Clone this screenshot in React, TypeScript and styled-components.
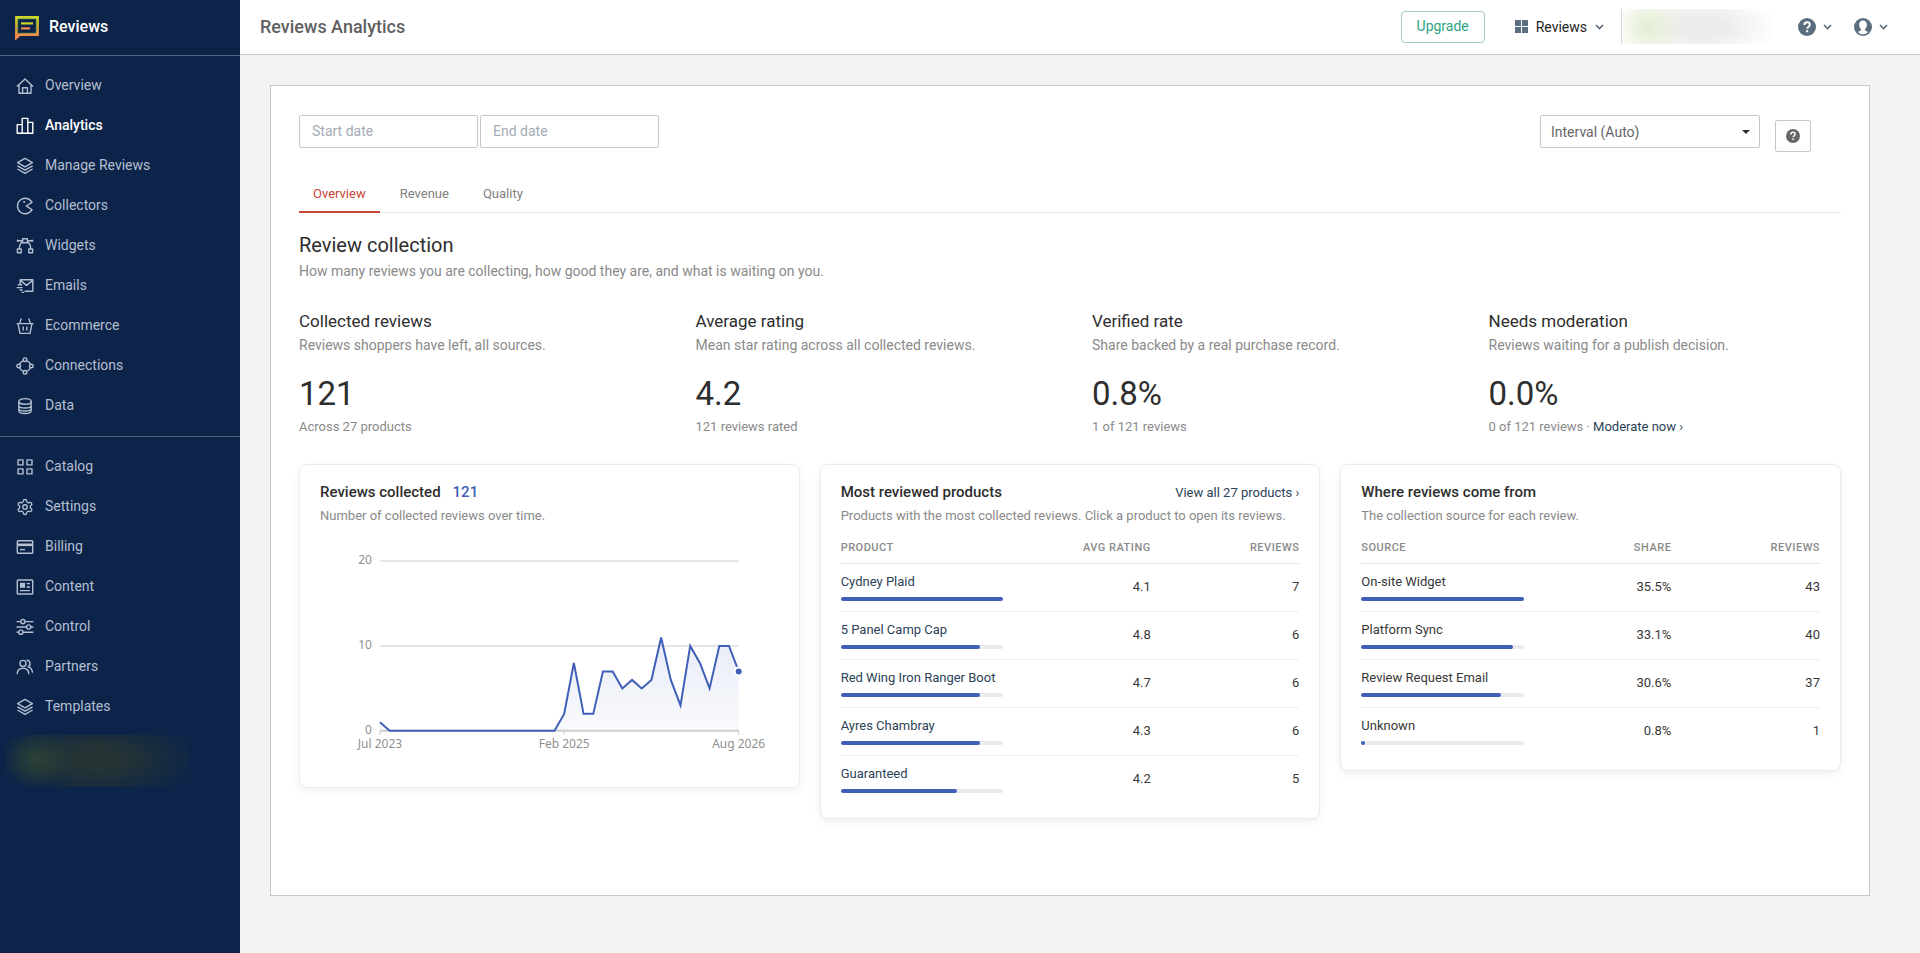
import React from 'react';
import styled, { createGlobalStyle } from 'styled-components';
import { Settings } from 'lucide-react';

const GlobalStyle = createGlobalStyle`
  *, *::before, *::after { box-sizing: border-box; }
  body {
    margin: 0;
    background: #f3f3f3;
    color: #2e2e2e;
    font-family: Roboto, "Liberation Sans", sans-serif;
    font-size: 14px;
    line-height: 20px;
  }
  h1, h2, h3, p { margin: 0; font-weight: 400; }
  a { color: inherit; text-decoration: none; }
  button, input, select { font-family: inherit; }
`;

const Shell = styled.div`
  display: flex;
  min-height: 100vh;
`;

/* ---------- Sidebar ---------- */

const Sidebar = styled.aside`
  flex: 0 0 240px;
  background: #0c2449;
  color: #b4bfd1;
`;

const Brand = styled.a`
  display: flex;
  align-items: center;
  gap: 10px;
  height: 56px;
  padding: 0 15px 2px;
  border-bottom: 1px solid #56657f;
  color: #fff;
  font-size: 16px;
  font-weight: 500;
`;

const BrandIcon = styled.svg`
  width: 24px;
  height: 24px;
  margin-top: 2px;
`;

const NavList = styled.ul`
  list-style: none;
  margin: 0;
  padding: 10px 0;
  & + & { border-top: 1px solid #56657f; }
`;

const NavLink = styled.a<{ $active?: boolean }>`
  display: flex;
  align-items: center;
  gap: 11px;
  height: 40px;
  padding: 0 16px 2px;
  color: ${p => (p.$active ? '#fff' : 'inherit')};
  font-weight: ${p => (p.$active ? 500 : 400)};
  svg { flex: none; margin-top: 2px; }
`;

const SidebarHaze = styled.div`
  height: 52px;
  margin: -2px 50px 0 5px;
  background:
    radial-gradient(ellipse 34px 28px at 31px 24px, rgba(62, 86, 44, 0.5), transparent),
    radial-gradient(ellipse 56% 84% at 50% 46%, rgba(46, 58, 44, 0.75) 20%, transparent);
`;

/* ---------- Top bar ---------- */

const Content = styled.div`
  flex: 1;
  min-width: 0;
`;

const TopBar = styled.header`
  display: flex;
  align-items: center;
  height: 55px;
  padding: 0 32px 1px 20px;
  background: #fff;
  border-bottom: 1px solid #c8c8c8;
`;

const PageTitle = styled.h1`
  flex: 1;
  color: #5f5f5f;
  font-size: 18px;
  font-weight: 500;
`;

const UpgradeButton = styled.button`
  width: 84px;
  height: 32px;
  margin-right: 30px;
  padding: 0 0 2px;
  border: 1px solid #9fcfb0;
  border-radius: 4px;
  background: #fff;
  color: #2aa686;
  font-size: 14px;
  cursor: pointer;
`;

const MenuButton = styled.button<{ $gap: number }>`
  display: flex;
  align-items: center;
  gap: ${p => p.$gap}px;
  padding: 0;
  border: 0;
  background: none;
  color: #1f1f1f;
  font-size: 14px;
  cursor: pointer;
`;

const AccountHaze = styled.div`
  width: 155px;
  height: 35px;
  margin: 0 22px 0 17px;
  border-left: 1px solid #d8d8d8;
  background:
    radial-gradient(ellipse 36px 34px at 26px 18px, #e4eed2, transparent),
    radial-gradient(ellipse 76px 34px at 80px 18px, #ececec 30%, transparent);
`;

const MenuGap = styled.div`
  width: 22px;
`;

/* ---------- Panel ---------- */

const Main = styled.main`
  padding: 30px 50px 56px 30px;
`;

const Panel = styled.section`
  padding: 29px 28px 76px;
  border: 1px solid #c8c8c8;
  background: #fff;
`;

const Filters = styled.form`
  display: flex;
  align-items: flex-start;
  gap: 2px;
`;

const DateInput = styled.input`
  width: 179px;
  height: 33px;
  padding: 0 12px 2px;
  border: 1px solid #c8c8c8;
  border-radius: 2px;
  background: #fff;
  color: #666;
  font-size: 14px;
  outline: none;
  &::placeholder { color: #a3abb4; opacity: 1; }
`;

const SelectWrap = styled.div`
  display: flex;
  align-items: center;
  justify-content: flex-end;
  position: relative;
  width: 220px;
  margin-left: auto;
  svg {
    position: absolute;
    right: 10px;
    pointer-events: none;
  }
`;

const IntervalSelect = styled.select`
  width: 100%;
  height: 33px;
  padding: 0 30px 0 10px;
  appearance: none;
  border: 1px solid #c8c8c8;
  border-radius: 2px;
  background: #fff;
  color: #666;
  font-size: 14px;
`;

const HelpButton = styled.button`
  display: flex;
  align-items: center;
  justify-content: center;
  width: 36px;
  height: 32px;
  margin: 5px 30px 0 13px;
  padding: 0;
  border: 1px solid #c8c8c8;
  border-radius: 2px;
  background: #fff;
  cursor: pointer;
`;

const Tabs = styled.nav`
  display: flex;
  gap: 6px;
  margin-top: 20px;
  border-bottom: 1px solid #e6e6e6;
`;

const Tab = styled.a<{ $active?: boolean }>`
  height: 41px;
  margin-bottom: -1px;
  padding: 12px 14px 7px;
  border-bottom: 2px solid ${p => (p.$active ? '#c64537' : 'transparent')};
  color: ${p => (p.$active ? '#c64537' : '#808080')};
  font-size: 13px;
`;

const SectionTitle = styled.h2`
  margin-top: 20px;
  font-size: 20px;
  line-height: 24px;
`;

const Muted = styled.p<{ $small?: boolean }>`
  color: #8a8a8a;
  font-size: ${p => (p.$small ? 13 : 14)}px;
`;

const Kpis = styled.div`
  display: grid;
  grid-template-columns: repeat(4, 1fr);
  gap: 44px;
  margin-top: 28px;
`;

const KpiTitle = styled.h3`
  font-size: 17px;
  line-height: 24px;
  margin-bottom: 2px;
`;

const KpiValue = styled.p`
  margin: 19px 0 3px;
  color: #2e2e2e;
  font-size: 33px;
  line-height: 40px;
`;

const TextLink = styled.a`
  color: #2b4257;
`;

const SectionIntro = styled(Muted)`
  margin-top: 4px;
`;

/* ---------- Cards ---------- */

const Cards = styled.div`
  display: grid;
  grid-template-columns: repeat(3, 1fr);
  align-items: start;
  gap: 20px;
  margin-top: 27px;
`;

const Card = styled.article`
  padding: 17px 20px 15px;
  border: 1px solid #ebebeb;
  border-radius: 8px;
  background: #fff;
  box-shadow: 0 3px 8px rgba(0, 0, 0, 0.06);
`;

const CardHead = styled.div`
  display: flex;
  align-items: baseline;
  gap: 12px;
  height: 20px;
  margin-bottom: 4px;
`;

const CardTitle = styled.h3`
  font-size: 15px;
  font-weight: 500;
`;

const CardTotal = styled.span`
  color: #3f5fb8;
  font-size: 15px;
  font-weight: 500;
`;

const CardLink = styled(TextLink)`
  margin-left: auto;
  font-size: 13px;
`;

const ChartSvg = styled.svg`
  display: block;
  width: 100%;
  height: auto;
  margin-top: 19px;
  text {
    fill: #909090;
    font-family: "Noto Sans", Roboto, sans-serif;
    font-size: 12px;
  }
`;

const DataTable = styled.table`
  width: 100%;
  margin-top: 7px;
  border-collapse: separate;
  border-spacing: 0;
  table-layout: fixed;
  th {
    height: 31px;
    padding: 0 0 1px;
    border-bottom: 1px solid #e4e4e4;
    color: #8a8a8a;
    font-size: 11px;
    font-weight: 500;
    letter-spacing: 0.5px;
    text-align: right;
    text-transform: uppercase;
  }
  th:first-child, td:first-child { text-align: left; }
  td {
    height: 48px;
    padding: 0 0 1px;
    border-bottom: 1px solid #f0f0f0;
    color: #383838;
    font-size: 13px;
    text-align: right;
  }
  td:first-child { padding-bottom: 3px; }
  tr:last-child td { border-bottom: 0; height: 47px; }
  .name { width: 35.5%; }
  .mid { width: 32.1%; }
`;

const ItemName = styled.span`
  display: block;
  white-space: nowrap;
`;

const ItemLink = styled(TextLink)`
  display: block;
  white-space: nowrap;
`;

const Track = styled.div`
  height: 4px;
  margin-top: 5px;
  border-radius: 2px;
  background: #ececec;
`;

const Fill = styled.div`
  height: 4px;
  border-radius: 2px;
  background: #3f5fb8;
`;

/* ---------- Icons ---------- */

const NavSvg = ({ children }: { children: React.ReactNode }) => (
  <svg width="18" height="18" viewBox="0 0 18 18" fill="none" stroke="currentColor" strokeWidth="1.4" strokeLinejoin="round" aria-hidden="true">
    {children}
  </svg>
);

const stackIcon = (
  <NavSvg>
    <path d="M9 1.4 16.4 5.6 9 9.8 1.6 5.6z" />
    <path d="M1.4 8.8 9 13.1 16.6 8.8M1.4 12 9 16.3 16.6 12" />
  </NavSvg>
);

const icons: Record<string, React.ReactNode> = {
  home: (
    <NavSvg>
      <path d="M1 9.4 9 1.9l8 7.5M3 8v8.3h12V8M6.6 16v-5.2h4.8V16" />
    </NavSvg>
  ),
  chart: (
    <NavSvg>
      <path d="M1.2 7.6h5v8.7h-5zM6.2 1.4h5.6v14.9H6.2zM11.8 5.4h5v10.9h-5z" />
    </NavSvg>
  ),
  stack: stackIcon,
  collector: (
    <NavSvg>
      <path d="M16 5.4a7.7 7.7 0 1 0 0 7.2L10.2 9z" />
      <circle cx="8.2" cy="5" r="1" fill="currentColor" stroke="none" />
    </NavSvg>
  ),
  bezier: (
    <NavSvg>
      <path d="M6.6 1.7h4.8v4H6.6zM1.4 12h3.8v3.8H1.4zM12.8 12h3.8v3.8h-3.8zM1.5 3.7h5M11.4 3.7h5M3.3 12c0-3.4 1.2-6 3.3-7.4M14.7 12c0-3.4-1.2-6-3.3-7.4" />
      <path d="M.8 2.7h2v2h-2zM15.2 2.7h2v2h-2z" fill="currentColor" stroke="none" />
    </NavSvg>
  ),
  mail: (
    <NavSvg>
      <path d="M4.2 7.2V2.8h12.6v11.4H8.6M4.4 3.4l6.1 5 6.1-5M1.8 7.7h4.4M.6 10.6h6M3.6 13h3M5.6 15.4h2.6" />
    </NavSvg>
  ),
  basket: (
    <NavSvg>
      <path d="M5.3 1.4 3.6 6.6M12.7 1.4l1.7 5.2M.6 6.6h16.8M2 6.6l2 9.8h10l2-9.8M7.2 9.6v4M10.8 9.6v4" />
    </NavSvg>
  ),
  connections: (
    <NavSvg>
      <path d="M6.8 3.8A6 6 0 0 0 3.7 7M11.2 3.8A6 6 0 0 1 14.3 7M3.7 11a6 6 0 0 0 3.1 3.2M14.3 11a6 6 0 0 1-3.1 3.2" />
      <circle cx="9" cy="2.7" r="1.8" />
      <circle cx="9" cy="15.3" r="1.8" />
      <circle cx="2.7" cy="9" r="1.8" />
      <circle cx="15.3" cy="9" r="1.8" />
    </NavSvg>
  ),
  data: (
    <NavSvg>
      <ellipse cx="9" cy="4.4" rx="6.2" ry="2.8" />
      <path d="M2.8 4.4v9.4c0 1.5 2.8 2.7 6.2 2.7s6.2-1.2 6.2-2.7V4.4M2.8 8.4c0 1.5 2.8 2.6 6.2 2.6s6.2-1.1 6.2-2.6M2.8 11.4c0 1.5 2.8 2.6 6.2 2.6s6.2-1.1 6.2-2.6" />
    </NavSvg>
  ),
  catalog: (
    <NavSvg>
      <path d="M2 1.9h5v5H2zM11 1.9h5v5h-5zM2 10.9h5v5H2zM11 10.9h5v5h-5z" />
    </NavSvg>
  ),
  settings: <Settings size={18} strokeWidth={1.8} aria-hidden="true" />,
  billing: (
    <NavSvg>
      <rect x="1.3" y="2.8" width="15.4" height="12.4" rx="0.8" />
      <path d="M1.3 6.8h15.4" strokeWidth="2.6" />
      <path d="M4 11.6h5" />
    </NavSvg>
  ),
  content: (
    <NavSvg>
      <rect x="1.3" y="2" width="15.4" height="14" rx="0.8" />
      <rect x="4" y="4.8" width="5" height="5" fill="currentColor" stroke="none" />
      <path d="M10.6 5.6H14M10.6 9H14M4 12.6h10" />
    </NavSvg>
  ),
  control: (
    <NavSvg>
      <path d="M.6 3.6h4.2M9 3.6h8.4M.6 9h10M14.8 9h2.6M.6 14.2h2.2M7 14.2h10.4" />
      <circle cx="6.9" cy="3.6" r="2.1" />
      <circle cx="12.7" cy="9" r="2.1" />
      <circle cx="4.9" cy="14.2" r="2.1" />
    </NavSvg>
  ),
  partners: (
    <NavSvg>
      <circle cx="7" cy="5.4" r="3" />
      <path d="M1.2 16.2c0-3.8 2.4-5.9 5.8-5.9s5.8 2.1 5.8 5.9M10.6 2.3a3.3 3.3 0 0 1 1.5 6.3c2.6 1 4.2 3 4.4 6.2" />
    </NavSvg>
  ),
};

const Chevron = () => (
  <svg width="9" height="6" viewBox="0 0 9 6" fill="none" stroke="#5a6b7b" strokeWidth="1.6" aria-hidden="true">
    <path d="M1 1l3.5 3.5L8 1" />
  </svg>
);

const QuestionIcon = ({ size, color }: { size: number; color: string }) => (
  <svg width={size} height={size} viewBox="0 0 18 18" fill="none" aria-hidden="true">
    <circle cx="9" cy="9" r="9" fill={color} />
    <path d="M6.3 7c0-1.6 1.1-2.7 2.8-2.7s2.7 1 2.7 2.4c0 2-2.6 1.9-2.6 4" stroke="#fff" strokeWidth="1.9" />
    <path d="M8.1 12.2h2.1v2H8.1z" fill="#fff" />
  </svg>
);

const UserIcon = () => (
  <svg width="18" height="18" viewBox="0 0 18 18" aria-hidden="true">
    <circle cx="9" cy="9" r="9" fill="#5a6e80" />
    <path d="M9 2.6c2.4 0 3.9 1.7 3.9 4.2 0 1.9-.8 3.4-1.8 4.3v1.2c.6.8 2 1 3.1 1.8A7.2 7.2 0 0 1 9 16.5a7.2 7.2 0 0 1-5.2-2.4c1.1-.8 2.5-1 3.1-1.8v-1.2c-1-.9-1.8-2.4-1.8-4.3 0-2.5 1.5-4.2 3.9-4.2z" fill="#fff" />
  </svg>
);

/* ---------- Data ---------- */

const primaryNav = [
  ['Overview', 'home'], ['Analytics', 'chart'], ['Manage Reviews', 'stack'],
  ['Collectors', 'collector'], ['Widgets', 'bezier'], ['Emails', 'mail'],
  ['Ecommerce', 'basket'], ['Connections', 'connections'], ['Data', 'data'],
];

const secondaryNav = [
  ['Catalog', 'catalog'], ['Settings', 'settings'], ['Billing', 'billing'],
  ['Content', 'content'], ['Control', 'control'], ['Partners', 'partners'],
  ['Templates', 'stack'],
];

const kpis = [
  { title: 'Collected reviews', text: 'Reviews shoppers have left, all sources.', value: '121', note: 'Across 27 products' },
  { title: 'Average rating', text: 'Mean star rating across all collected reviews.', value: '4.2', note: '121 reviews rated' },
  { title: 'Verified rate', text: 'Share backed by a real purchase record.', value: '0.8%', note: '1 of 121 reviews' },
  { title: 'Needs moderation', text: 'Reviews waiting for a publish decision.', value: '0.0%', note: '0 of 121 reviews · ', link: 'Moderate now ›' },
];

type Row = { name: string; mid: string; count: number };

const products: Row[] = [
  { name: 'Cydney Plaid', mid: '4.1', count: 7 },
  { name: '5 Panel Camp Cap', mid: '4.8', count: 6 },
  { name: 'Red Wing Iron Ranger Boot', mid: '4.7', count: 6 },
  { name: 'Ayres Chambray', mid: '4.3', count: 6 },
  { name: 'Guaranteed', mid: '4.2', count: 5 },
];

const sources: Row[] = [
  { name: 'On-site Widget', mid: '35.5%', count: 43 },
  { name: 'Platform Sync', mid: '33.1%', count: 40 },
  { name: 'Review Request Email', mid: '30.6%', count: 37 },
  { name: 'Unknown', mid: '0.8%', count: 1 },
];

/* Monthly totals, July 2023 to August 2026. */
const monthly = [1, ...Array(18).fill(0), 2, 8, 2, 2, 7, 7, 5, 6, 5, 6, 11, 6, 3, 10, 8, 5, 10, 10, 7];

/* ---------- Parts ---------- */

const Nav = ({ items }: { items: string[][] }) => (
  <NavList>
    {items.map(([label, icon]) => (
      <li key={label}>
        <NavLink href="#" $active={label === 'Analytics'} aria-current={label === 'Analytics' ? 'page' : undefined}>
          {icons[icon]}
          {label}
        </NavLink>
      </li>
    ))}
  </NavList>
);

const CHART = { left: 60, right: 419, base: 186, step: 8.5 };

const ReviewsChart = () => {
  const dx = (CHART.right - CHART.left) / (monthly.length - 1);
  const x = (i: number) => CHART.left + i * dx;
  const y = (v: number) => CHART.base - v * CHART.step;
  const line = monthly.map((v, i) => `${x(i)},${y(v)}`).join(' ');
  const last = monthly.length - 1;
  return (
    <ChartSvg viewBox="0 0 459 227" role="img" aria-label="Collected reviews per month">
      <defs>
        <linearGradient id="area" x1="0" y1="0" x2="0" y2="1">
          <stop offset="0" stopColor="#3f5fb8" stopOpacity="0.12" />
          <stop offset="1" stopColor="#3f5fb8" stopOpacity="0.03" />
        </linearGradient>
      </defs>
      {[20, 10].map(v => (
        <path key={v} d={`M${CHART.left} ${y(v)}H${CHART.right}`} stroke="#e6e6e6" strokeWidth="2" />
      ))}
      <path d={`M${CHART.left} ${CHART.base}H${CHART.right}`} stroke="#cfcfcf" strokeWidth="2" />
      {[0, 10, 20].map(v => (
        <text key={v} x={CHART.left - 8} y={y(v) + 3} textAnchor="end">{v}</text>
      ))}
      {([[0, 'Jul 2023'], [19, 'Feb 2025'], [last, 'Aug 2026']] as [number, string][]).map(([i, label]) => (
        <g key={label}>
          <path d={`M${x(i)} ${CHART.base}v4`} stroke="#cfcfcf" />
          <text x={x(i)} y={CHART.base + 17} textAnchor="middle">{label}</text>
        </g>
      ))}
      <polygon points={`${x(0)},${CHART.base} ${line} ${x(last)},${CHART.base}`} fill="url(#area)" />
      <polyline points={line} fill="none" stroke="#3f5fb8" strokeWidth="2" />
      <circle cx={x(last)} cy={y(monthly[last])} r="4" fill="#3f5fb8" stroke="#fff" strokeWidth="2" />
    </ChartSvg>
  );
};

const RankTable = ({ heads, rows, linked }: { heads: string[]; rows: Row[]; linked?: boolean }) => {
  const max = Math.max(...rows.map(r => r.count));
  return (
    <DataTable>
      <thead>
        <tr>
          <th scope="col" className="name">{heads[0]}</th>
          <th scope="col" className="mid">{heads[1]}</th>
          <th scope="col">{heads[2]}</th>
        </tr>
      </thead>
      <tbody>
        {rows.map(r => (
          <tr key={r.name}>
            <td>
              {linked ? <ItemLink href="#">{r.name}</ItemLink> : <ItemName>{r.name}</ItemName>}
              <Track>
                <Fill style={{ width: `${(r.count / max) * 100}%` }} />
              </Track>
            </td>
            <td>{r.mid}</td>
            <td>{r.count}</td>
          </tr>
        ))}
      </tbody>
    </DataTable>
  );
};

export default function App() {
  return (
    <>
      <GlobalStyle />
      <Shell>
        <Sidebar>
          <Brand href="#">
            <BrandIcon viewBox="0 0 24 24" fill="none" aria-hidden="true">
              <defs>
                <linearGradient id="brand" x1="0" y1="0" x2="0" y2="24" gradientUnits="userSpaceOnUse">
                  <stop offset="0.1" stopColor="#cfd62a" />
                  <stop offset="0.45" stopColor="#c9a83a" />
                  <stop offset="0.85" stopColor="#f58a4b" />
                </linearGradient>
              </defs>
              <path d="M1.5 20.5V1.5h21v17H4.5L1.5 21.5z" stroke="url(#brand)" strokeWidth="2.8" />
              <path d="M0 18v6l5-4z" fill="#f5854f" />
              <path d="M2.9 17.2V2.9h18.2v14.2H4.2" stroke="#3f8a4a" strokeWidth="0.6" />
              <path d="M6 7.4h12" stroke="#cfd62a" strokeWidth="2.2" />
              <path d="M6 12.4h9" stroke="#f58a4b" strokeWidth="2.2" />
            </BrandIcon>
            Reviews
          </Brand>
          <nav aria-label="Main">
            <Nav items={primaryNav} />
            <Nav items={secondaryNav} />
          </nav>
          <SidebarHaze />
        </Sidebar>

        <Content>
          <TopBar>
            <PageTitle>Reviews Analytics</PageTitle>
            <UpgradeButton type="button">Upgrade</UpgradeButton>
            <MenuButton type="button" $gap={8}>
              <svg width="13" height="13" viewBox="0 0 13 13" fill="#5a6e80" aria-hidden="true">
                <path d="M0 0h6v6H0zM7 0h6v6H7zM0 7h6v6H0zM7 7h6v6H7z" />
              </svg>
              Reviews
              <Chevron />
            </MenuButton>
            <AccountHaze />
            <MenuButton type="button" $gap={7} aria-label="Help">
              <QuestionIcon size={18} color="#5a6e80" />
              <Chevron />
            </MenuButton>
            <MenuGap />
            <MenuButton type="button" $gap={7} aria-label="Account">
              <UserIcon />
              <Chevron />
            </MenuButton>
          </TopBar>

          <Main>
            <Panel>
              <Filters>
                <DateInput type="text" placeholder="Start date" aria-label="Start date" />
                <DateInput type="text" placeholder="End date" aria-label="End date" />
                <SelectWrap>
                  <IntervalSelect aria-label="Interval">
                    <option>Interval (Auto)</option>
                  </IntervalSelect>
                  <svg width="8" height="4" viewBox="0 0 8 4" aria-hidden="true">
                    <path d="M0 0h8L4 4z" fill="#2e2e2e" />
                  </svg>
                </SelectWrap>
                <HelpButton type="button" aria-label="Help with filters">
                  <QuestionIcon size={14} color="#666" />
                </HelpButton>
              </Filters>

              <Tabs>
                <Tab href="#" $active aria-current="page">Overview</Tab>
                <Tab href="#">Revenue</Tab>
                <Tab href="#">Quality</Tab>
              </Tabs>

              <SectionTitle>Review collection</SectionTitle>
              <SectionIntro>How many reviews you are collecting, how good they are, and what is waiting on you.</SectionIntro>

              <Kpis>
                {kpis.map(k => (
                  <div key={k.title}>
                    <KpiTitle>{k.title}</KpiTitle>
                    <Muted>{k.text}</Muted>
                    <KpiValue>{k.value}</KpiValue>
                    <Muted $small>
                      {k.note}
                      {k.link && <TextLink href="#">{k.link}</TextLink>}
                    </Muted>
                  </div>
                ))}
              </Kpis>

              <Cards>
                <Card>
                  <CardHead>
                    <CardTitle>Reviews collected</CardTitle>
                    <CardTotal>121</CardTotal>
                  </CardHead>
                  <Muted $small>Number of collected reviews over time.</Muted>
                  <ReviewsChart />
                </Card>
                <Card>
                  <CardHead>
                    <CardTitle>Most reviewed products</CardTitle>
                    <CardLink href="#">View all 27 products ›</CardLink>
                  </CardHead>
                  <Muted $small>Products with the most collected reviews. Click a product to open its reviews.</Muted>
                  <RankTable heads={['Product', 'Avg rating', 'Reviews']} rows={products} linked />
                </Card>
                <Card>
                  <CardHead>
                    <CardTitle>Where reviews come from</CardTitle>
                  </CardHead>
                  <Muted $small>The collection source for each review.</Muted>
                  <RankTable heads={['Source', 'Share', 'Reviews']} rows={sources} />
                </Card>
              </Cards>
            </Panel>
          </Main>
        </Content>
      </Shell>
    </>
  );
}
